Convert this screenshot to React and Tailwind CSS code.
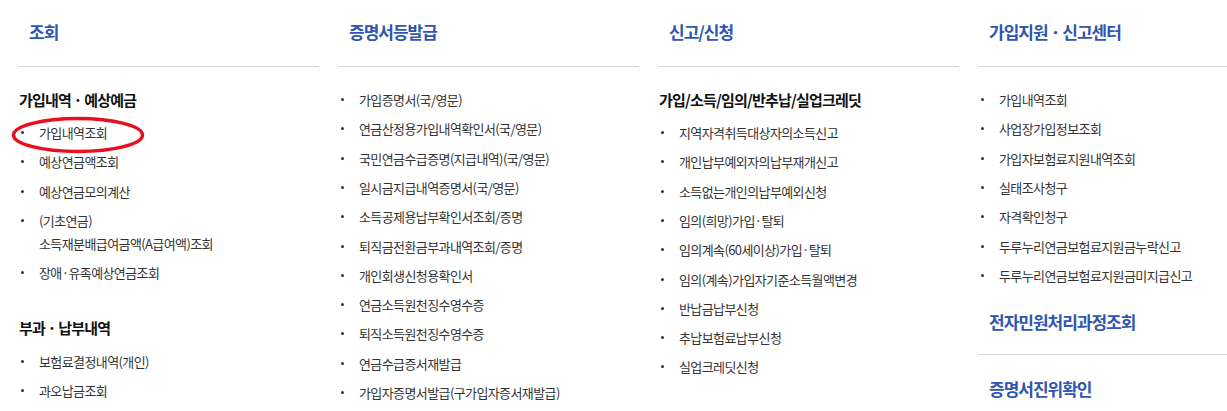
import React from 'react';

const COLUMNS = [
  {
    title: '조회',
    groups: [
      {
        label: '가입내역 · 예상예금',
        items: ['가입내역조회', '예상연금액조회', '예상연금모의계산', ['(기초연금)', '소득재분배급여금액(A급여액)조회'], '장애·유족예상연금조회'],
      },
      {
        label: '부과 · 납부내역',
        items: ['보험료결정내역(개인)', '과오납금조회'],
      },
    ],
    circled: true,
  },
  {
    title: '증명서등발급',
    groups: [
      {
        items: [
          '가입증명서(국/영문)',
          '연금산정용가입내역확인서(국/영문)',
          '국민연금수급증명(지급내역)(국/영문)',
          '일시금지급내역증명서(국/영문)',
          '소득공제용납부확인서조회/증명',
          '퇴직금전환금부과내역조회/증명',
          '개인회생신청용확인서',
          '연금소득원천징수영수증',
          '퇴직소득원천징수영수증',
          '연금수급증서재발급',
          '가입자증명서발급(구가입자증서재발급)',
        ],
      },
    ],
  },
  {
    title: '신고/신청',
    groups: [
      {
        label: '가입/소득/임의/반추납/실업크레딧',
        items: [
          '지역자격취득대상자의소득신고',
          '개인납부예외자의납부재개신고',
          '소득없는개인의납부예외신청',
          '임의(희망)가입·탈퇴',
          '임의계속(60세이상)가입·탈퇴',
          '임의(계속)가입자기준소득월액변경',
          '반납금납부신청',
          '추납보험료납부신청',
          '실업크레딧신청',
        ],
      },
    ],
  },
];

const CENTER_ITEMS = [
  '가입내역조회',
  '사업장가입정보조회',
  '가입자보험료지원내역조회',
  '실태조사청구',
  '자격확인청구',
  '두루누리연금보험료지원금누락신고',
  '두루누리연금보험료지원금미지급신고',
];

function Heading({ children }) {
  return (
    <div className="h-[67px] border-b border-[#d4d4d4] pt-[20px] pl-[10px]">
      <h2 className="text-[17px] leading-[24px] font-bold tracking-[-1px] text-[#2f56b0]">{children}</h2>
    </div>
  );
}

function Item({ text }) {
  const lines = Array.isArray(text) ? text : [text];
  return (
    <li className="flex py-[3.15px]">
      <span className="mt-[10px] ml-[2px] h-[3px] w-[3px] shrink-0 rounded-full bg-[#333]" />
      <span className="ml-[15px] text-[13px] leading-[23px] tracking-[-0.6px] text-[#333]">
        {lines.map((l) => (
          <span key={l} className="block">
            {l}
          </span>
        ))}
      </span>
    </li>
  );
}

function Column({ col }) {
  return (
    <div className="relative w-[300px] shrink-0">
      <Heading>{col.title}</Heading>
      {col.groups.map((g, i) =>
        g.label ? (
          <div key={i} className={i === 0 ? 'pt-[21px]' : 'pt-[29px]'}>
            <h3 className="text-[15px] leading-[24px] font-bold tracking-[-0.8px] text-[#111]">{g.label}</h3>
            <ul className="mt-[6px]">
              {g.items.map((t) => (
                <Item key={t} text={t} />
              ))}
            </ul>
          </div>
        ) : (
          <ul key={i} className="pt-[18px]">
            {g.items.map((t) => (
              <Item key={t} text={t} />
            ))}
          </ul>
        )
      )}
      {col.circled && (
        <svg className="absolute left-[-8px] top-[116px]" width="134" height="38" viewBox="0 0 134 38">
          <ellipse cx="67" cy="19" rx="64.5" ry="16.5" fill="none" stroke="#e8101e" strokeWidth="3.5" />
        </svg>
      )}
    </div>
  );
}

export default function App() {
  return (
    <div className="flex h-[411px] w-[1227px] gap-5 overflow-hidden bg-white pl-[19px] font-['Noto_Sans_CJK_KR','Noto_Sans',sans-serif]">
      {COLUMNS.map((c) => (
        <Column key={c.title} col={c} />
      ))}

      {/* centre column */}
      <div className="w-[300px] shrink-0">
        <Heading>가입지원 · 신고센터</Heading>
        <ul className="pt-[18px]">
          {CENTER_ITEMS.map((t) => (
            <Item key={t} text={t} />
          ))}
        </ul>
        <div className="mt-[20px] border-b border-[#d4d4d4] pb-[20px] pl-[10px]">
          <h2 className="text-[17px] leading-[24px] font-bold tracking-[-1px] text-[#2f56b0]">전자민원처리과정조회</h2>
        </div>
        <h2 className="mt-[22px] pl-[10px] text-[17px] leading-[24px] font-bold tracking-[-1px] text-[#2f56b0]">
          증명서진위확인
        </h2>
      </div>
    </div>
  );
}
